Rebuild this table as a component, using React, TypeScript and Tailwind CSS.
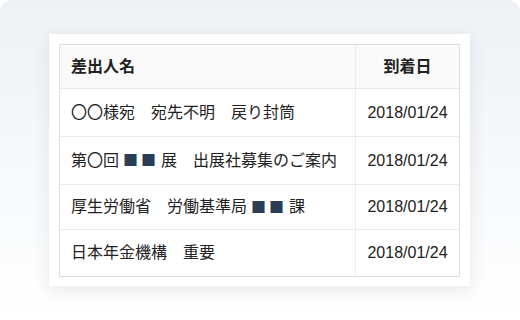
const rows = [
  { h: "h-[48px]", name: "〇〇様宛　宛先不明　戻り封筒", date: "2018/01/24" },
  { h: "h-[48px]", name: "第〇回■■展　出展社募集のご案内", date: "2018/01/24" },
  { h: "h-[45px]", name: "厚生労働省　労働基準局■■課", date: "2018/01/24" },
  { h: "h-[46px]", name: "日本年金機構　重要", date: "2018/01/24" },
];

function Name({ text }: { text: string }) {
  // the ■ blocks are navy, with some air around them
  const parts = text.split(/(■+)/);
  return (
    <>
      {parts.map((p, i) =>
        p.startsWith("■") ? (
          <span
            key={i}
            className="ml-[4px] mr-[2px] tracking-[3px] text-[15px] text-[#2c3e55] font-['Noto_Sans_CJK_JP',sans-serif]"
          >
            {p}
          </span>
        ) : (
          <span key={i}>{p}</span>
        )
      )}
    </>
  );
}

export default function App() {
  return (
    <div
      className="w-[520px] h-[320px] rounded-t-xl bg-linear-to-b from-[#eef2f6] to-white pt-[34px] pl-[49px]"
      style={{ fontFamily: '"Liberation Sans", "Noto Sans CJK JP", sans-serif' }}
    >
      <div className="w-[421px] h-[252px] bg-white p-[10px] shadow-[0_4px_16px_rgba(30,40,60,0.10)]">
        <div className="border border-[#dedede] text-[16px] text-[#222]">
          <div className="flex h-[44px] bg-[#fafafa] border-b border-[#e8e8e8] font-bold">
            <div className="w-[296px] border-r border-[#ececec] flex items-center pl-[11px]">差出人名</div>
            <div className="flex-1 flex items-center justify-center">到着日</div>
          </div>
          {rows.map((r, i) => (
            <div
              key={i}
              className={`flex ${r.h} ${i < rows.length - 1 ? "border-b border-[#ececec]" : ""}`}
            >
              <div className="w-[296px] border-r border-[#ececec] flex items-center pl-[11px] whitespace-nowrap">
                <Name text={r.name} />
              </div>
              <div className="flex-1 flex items-center justify-center">{r.date}</div>
            </div>
          ))}
        </div>
      </div>
    </div>
  );
}
